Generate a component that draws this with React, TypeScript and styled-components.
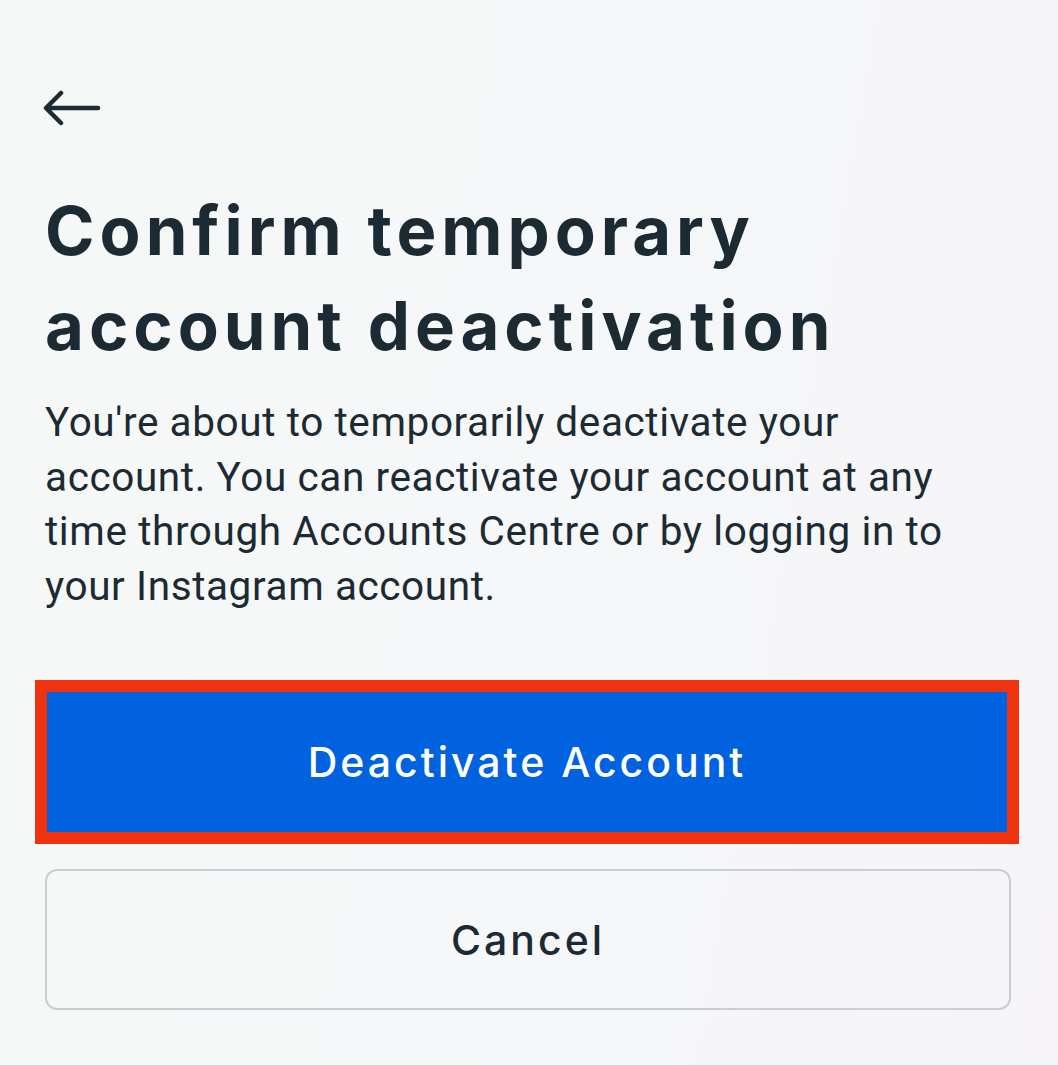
import React from "react";
import styled, { createGlobalStyle } from "styled-components";

const Global = createGlobalStyle`
  html, body { margin: 0; padding: 0; }
  body {
    width: 1058px;
    height: 1065px;
    overflow: hidden;
    background: linear-gradient(100deg, #f6f8f8 0%, #f5f7f8 55%, #f6f4f7 100%);
    font-family: Roboto, "Noto Sans", sans-serif;
    color: #1c2b33;
  }
`;

const Page = styled.main`
  box-sizing: border-box;
  width: 1058px;
  height: 1065px;
  padding: 88px 47px 0 45px;
  display: flex;
  flex-direction: column;
`;

const BackButton = styled.button`
  width: 60px;
  height: 40px;
  padding: 0;
  margin: 0 0 0 -2px;
  border: none;
  background: none;
  display: flex;
  align-items: center;
`;

const Title = styled.h1`
  margin: 55px 0 0 0;
  font-family: Inter, "Open Sans", sans-serif;
  font-weight: 700;
  font-size: 67px;
  line-height: 95px;
  letter-spacing: 5px;
  color: #1c2b33;
`;

const Body = styled.p`
  margin: 22px 0 0 0;
  max-width: 940px;
  font-family: Roboto, sans-serif;
  font-size: 40.5px;
  line-height: 54.5px;
  color: #1c2b33;
  letter-spacing: 0.6px;
`;

const Actions = styled.div`
  margin-top: 67px;
  display: flex;
  flex-direction: column;
  gap: 25px;
`;

const Highlight = styled.div`
  margin-left: -10px;
  margin-right: -8px;
  border: 12px solid #f0330f;
  display: flex;
`;

const PrimaryButton = styled.button`
  flex: 1;
  height: 140px;
  border: none;
  background: #0162e0;
  color: #ffffff;
  font-family: Inter, Roboto, sans-serif;
  font-weight: 500;
  font-size: 41px;
  letter-spacing: 3px;
`;

const SecondaryButton = styled.button`
  height: 141px;
  border: 2px solid #c9ced3;
  border-radius: 12px;
  background: transparent;
  color: #1c2b33;
  font-family: Inter, Roboto, sans-serif;
  font-weight: 500;
  font-size: 41px;
  letter-spacing: 3px;
`;

export default function App() {
  return (
    <>
      <Global />
      <Page>
        <BackButton aria-label="Back">
          <svg width="58" height="38" viewBox="0 0 58 38" fill="none">
            <path
              d="M55 19H4M18 4L3 19L18 34"
              stroke="#1c2b33"
              strokeWidth="4.5"
              strokeLinecap="round"
              strokeLinejoin="round"
            />
          </svg>
        </BackButton>
        <Title>
          Confirm temporary
          <br />
          account deactivation
        </Title>
        <Body>
          You're about to temporarily deactivate your account. You can reactivate your account
          at any time through Accounts Centre or by logging in to your Instagram account.
        </Body>
        <Actions>
          <Highlight>
            <PrimaryButton>Deactivate Account</PrimaryButton>
          </Highlight>
          <SecondaryButton>Cancel</SecondaryButton>
        </Actions>
      </Page>
    </>
  );
}
